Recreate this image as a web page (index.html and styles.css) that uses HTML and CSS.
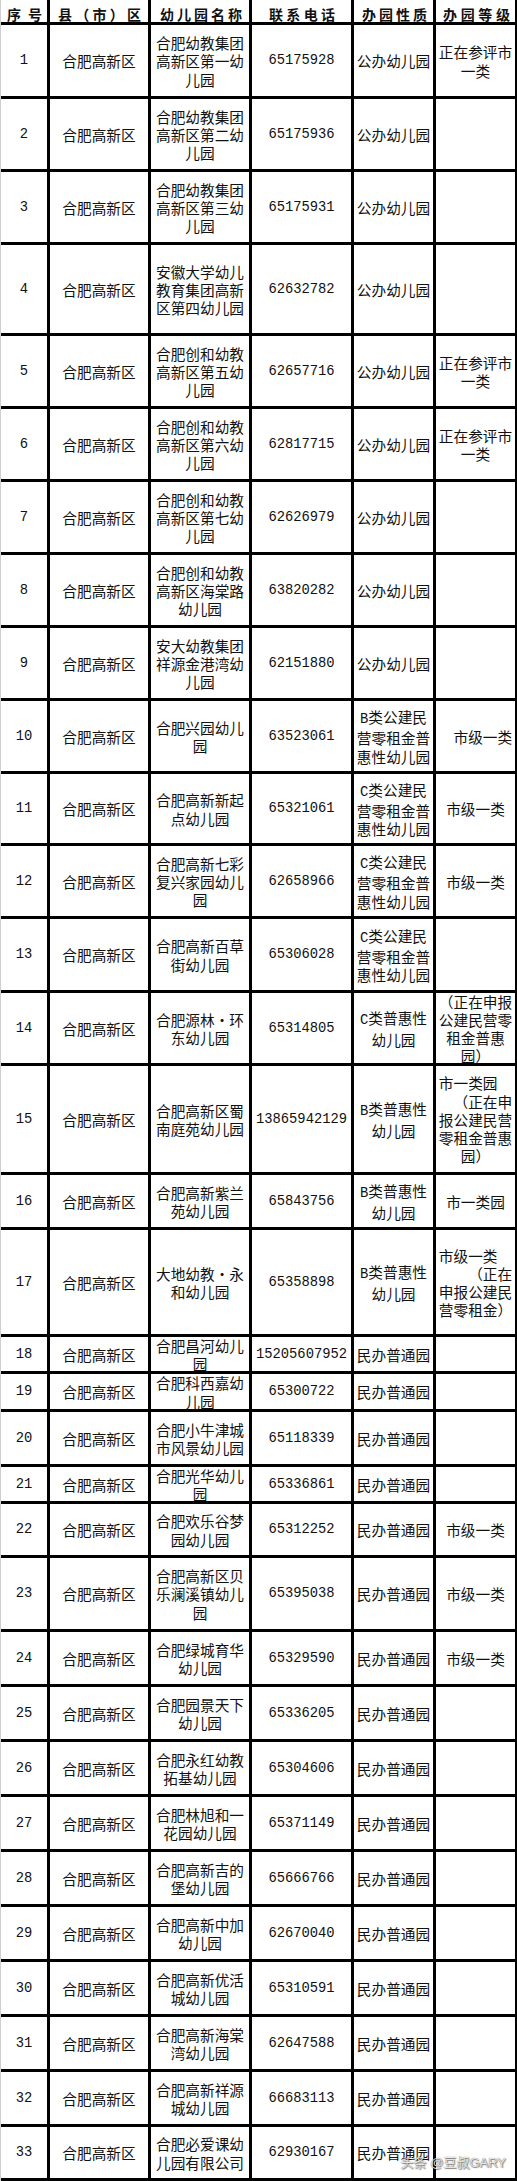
FILE: index.html
```html
<!DOCTYPE html>
<html lang="zh-CN">
<head>
<meta charset="utf-8">
<title>合肥高新区幼儿园名单</title>
<link rel="stylesheet" href="styles.css">
</head>
<body>
<div class="sheet">
  <div class="row head">
    <div class="cell hd hd1"><span>序</span><span>号</span></div>
    <div class="cell hd hd2"><span>县</span><span>（</span><span>市</span><span>）</span><span>区</span></div>
    <div class="cell hd hd3"><span>幼</span><span>儿</span><span>园</span><span>名</span><span>称</span></div>
    <div class="cell hd hd4"><span>联</span><span>系</span><span>电</span><span>话</span></div>
    <div class="cell hd hd5"><span>办</span><span>园</span><span>性</span><span>质</span></div>
    <div class="cell hd hd6"><span>办</span><span>园</span><span>等</span><span>级</span></div>
  </div>

  <div class="row h71"><div class="cell num">1</div><div class="cell">合肥高新区</div><div class="cell">合肥幼教集团高新区第一幼儿园</div><div class="cell num">65175928</div><div class="cell">公办幼儿园</div><div class="cell">正在参评市一类</div></div>
  <div class="row h70"><div class="cell num">2</div><div class="cell">合肥高新区</div><div class="cell">合肥幼教集团高新区第二幼儿园</div><div class="cell num">65175936</div><div class="cell">公办幼儿园</div><div class="cell"></div></div>
  <div class="row h70"><div class="cell num">3</div><div class="cell">合肥高新区</div><div class="cell">合肥幼教集团高新区第三幼儿园</div><div class="cell num">65175931</div><div class="cell">公办幼儿园</div><div class="cell"></div></div>
  <div class="row h88"><div class="cell num">4</div><div class="cell">合肥高新区</div><div class="cell">安徽大学幼儿教育集团高新区第四幼儿园</div><div class="cell num">62632782</div><div class="cell">公办幼儿园</div><div class="cell"></div></div>
  <div class="row h70"><div class="cell num">5</div><div class="cell">合肥高新区</div><div class="cell">合肥创和幼教高新区第五幼儿园</div><div class="cell num">62657716</div><div class="cell">公办幼儿园</div><div class="cell">正在参评市一类</div></div>
  <div class="row h70"><div class="cell num">6</div><div class="cell">合肥高新区</div><div class="cell">合肥创和幼教高新区第六幼儿园</div><div class="cell num">62817715</div><div class="cell">公办幼儿园</div><div class="cell">正在参评市一类</div></div>
  <div class="row h70"><div class="cell num">7</div><div class="cell">合肥高新区</div><div class="cell">合肥创和幼教高新区第七幼儿园</div><div class="cell num">62626979</div><div class="cell">公办幼儿园</div><div class="cell"></div></div>
  <div class="row h70"><div class="cell num">8</div><div class="cell">合肥高新区</div><div class="cell">合肥创和幼教高新区海棠路幼儿园</div><div class="cell num">63820282</div><div class="cell">公办幼儿园</div><div class="cell"></div></div>
  <div class="row h70"><div class="cell num">9</div><div class="cell">合肥高新区</div><div class="cell">安大幼教集团祥源金港湾幼儿园</div><div class="cell num">62151880</div><div class="cell">公办幼儿园</div><div class="cell"></div></div>
  <div class="row h70"><div class="cell num">10</div><div class="cell">合肥高新区</div><div class="cell">合肥兴园幼儿园</div><div class="cell num">63523061</div><div class="cell"><span><span class="lat">B</span>类公建民营零租金普惠性幼儿园</span></div><div class="cell"><span><span class="sp"></span>市级一类</span></div></div>
  <div class="row h69"><div class="cell num">11</div><div class="cell">合肥高新区</div><div class="cell">合肥高新新起点幼儿园</div><div class="cell num">65321061</div><div class="cell"><span><span class="lat">C</span>类公建民营零租金普惠性幼儿园</span></div><div class="cell">市级一类</div></div>
  <div class="row h70"><div class="cell num">12</div><div class="cell">合肥高新区</div><div class="cell">合肥高新七彩复兴家园幼儿园</div><div class="cell num">62658966</div><div class="cell"><span><span class="lat">C</span>类公建民营零租金普惠性幼儿园</span></div><div class="cell">市级一类</div></div>
  <div class="row h71"><div class="cell num">13</div><div class="cell">合肥高新区</div><div class="cell">合肥高新百草街幼儿园</div><div class="cell num">65306028</div><div class="cell"><span><span class="lat">C</span>类公建民营零租金普惠性幼儿园</span></div><div class="cell"></div></div>
  <div class="row h70"><div class="cell num">14</div><div class="cell">合肥高新区</div><div class="cell"><span>合肥源林<span class="dot">·</span>环东幼儿园</span></div><div class="cell num">65314805</div><div class="cell"><span><span class="lat">C</span>类普惠性幼儿园</span></div><div class="cell"><span>（正在申报<br>公建民营零<br>租金普惠<br>园）</span></div></div>
  <div class="row h106"><div class="cell num">15</div><div class="cell">合肥高新区</div><div class="cell">合肥高新区蜀南庭苑幼儿园</div><div class="cell num">13865942129</div><div class="cell"><span><span class="lat">B</span>类普惠性幼儿园</span></div><div class="cell"><span>市一类园<span class="sp"></span><br><span class="sp"></span>（正在申<br>报公建民营<br>零租金普惠<br>园）</span></div></div>
  <div class="row h52"><div class="cell num">16</div><div class="cell">合肥高新区</div><div class="cell">合肥高新紫兰苑幼儿园</div><div class="cell num">65843756</div><div class="cell"><span><span class="lat">B</span>类普惠性幼儿园</span></div><div class="cell">市一类园</div></div>
  <div class="row h104"><div class="cell num">17</div><div class="cell">合肥高新区</div><div class="cell"><span>大地幼教<span class="dot">·</span>永和幼儿园</span></div><div class="cell num">65358898</div><div class="cell"><span><span class="lat">B</span>类普惠性幼儿园</span></div><div class="cell"><span>市级一类<span class="sp"></span><br><span class="sp"></span><span class="sp"></span>（正在<br>申报公建民<br>营零租金）</span></div></div>
  <div class="row h34"><div class="cell num">18</div><div class="cell">合肥高新区</div><div class="cell">合肥昌河幼儿园</div><div class="cell num">15205607952</div><div class="cell">民办普通园</div><div class="cell"></div></div>
  <div class="row h35"><div class="cell num">19</div><div class="cell">合肥高新区</div><div class="cell">合肥科西嘉幼儿园</div><div class="cell num">65300722</div><div class="cell">民办普通园</div><div class="cell"></div></div>
  <div class="row h52"><div class="cell num">20</div><div class="cell">合肥高新区</div><div class="cell">合肥小牛津城市风景幼儿园</div><div class="cell num">65118339</div><div class="cell">民办普通园</div><div class="cell"></div></div>
  <div class="row h34"><div class="cell num">21</div><div class="cell">合肥高新区</div><div class="cell">合肥光华幼儿园</div><div class="cell num">65336861</div><div class="cell">民办普通园</div><div class="cell"></div></div>
  <div class="row h51"><div class="cell num">22</div><div class="cell">合肥高新区</div><div class="cell">合肥欢乐谷梦园幼儿园</div><div class="cell num">65312252</div><div class="cell">民办普通园</div><div class="cell">市级一类</div></div>
  <div class="row h71"><div class="cell num">23</div><div class="cell">合肥高新区</div><div class="cell">合肥高新区贝乐澜溪镇幼儿园</div><div class="cell num">65395038</div><div class="cell">民办普通园</div><div class="cell">市级一类</div></div>
  <div class="row h52"><div class="cell num">24</div><div class="cell">合肥高新区</div><div class="cell">合肥绿城育华幼儿园</div><div class="cell num">65329590</div><div class="cell">民办普通园</div><div class="cell">市级一类</div></div>
  <div class="row h52"><div class="cell num">25</div><div class="cell">合肥高新区</div><div class="cell">合肥园景天下幼儿园</div><div class="cell num">65336205</div><div class="cell">民办普通园</div><div class="cell"></div></div>
  <div class="row h52"><div class="cell num">26</div><div class="cell">合肥高新区</div><div class="cell">合肥永红幼教拓基幼儿园</div><div class="cell num">65304606</div><div class="cell">民办普通园</div><div class="cell"></div></div>
  <div class="row h52"><div class="cell num">27</div><div class="cell">合肥高新区</div><div class="cell">合肥林旭和一花园幼儿园</div><div class="cell num">65371149</div><div class="cell">民办普通园</div><div class="cell"></div></div>
  <div class="row h52"><div class="cell num">28</div><div class="cell">合肥高新区</div><div class="cell">合肥高新吉的堡幼儿园</div><div class="cell num">65666766</div><div class="cell">民办普通园</div><div class="cell"></div></div>
  <div class="row h52"><div class="cell num">29</div><div class="cell">合肥高新区</div><div class="cell">合肥高新中加幼儿园</div><div class="cell num">62670040</div><div class="cell">民办普通园</div><div class="cell"></div></div>
  <div class="row h52"><div class="cell num">30</div><div class="cell">合肥高新区</div><div class="cell">合肥高新优活城幼儿园</div><div class="cell num">65310591</div><div class="cell">民办普通园</div><div class="cell"></div></div>
  <div class="row h52"><div class="cell num">31</div><div class="cell">合肥高新区</div><div class="cell">合肥高新海棠湾幼儿园</div><div class="cell num">62647588</div><div class="cell">民办普通园</div><div class="cell"></div></div>
  <div class="row h52"><div class="cell num">32</div><div class="cell">合肥高新区</div><div class="cell">合肥高新祥源城幼儿园</div><div class="cell num">66683113</div><div class="cell">民办普通园</div><div class="cell"></div></div>
  <div class="row h51"><div class="cell num">33</div><div class="cell">合肥高新区</div><div class="cell">合肥必爱课幼儿园有限公司</div><div class="cell num">62930167</div><div class="cell">民办普通园</div><div class="cell"></div></div>

  <div class="wm">头条 @豆叔GARY</div>
</div>
</body>
</html>
```

FILE: styles.css
```css
html, body {
  margin: 0;
  padding: 0;
  background: #fff;
}

.sheet {
  position: relative;
  width: 517px;
  box-sizing: border-box;
  display: flex;
  flex-direction: column;
  gap: 3px;
  background: #000;
  border-left: 1px solid #cfcfcf;
  padding: 0 2px 3px 0;
  font-family: "Noto Sans CJK SC", sans-serif;
  font-size: 14.67px;
  line-height: 18.25px;
  color: #111;
  text-spacing-trim: space-all;
  text-autospace: no-autospace;
}

.row {
  display: grid;
  grid-template-columns: 46px 98px 98px 99px 79px 79px;
  grid-template-rows: minmax(0, 1fr);
  column-gap: 3px;
  flex: none;
}

.cell {
  background: #fff;
  display: flex;
  align-items: center;
  justify-content: center;
  text-align: center;
  min-width: 0;
  min-height: 0;
  padding-top: 2px;
  box-sizing: border-box;
}

.num {
  font-family: "Liberation Mono", monospace;
  font-size: 13.8px;
}

.lat {
  font-family: "Liberation Mono", monospace;
  font-size: 13.8px;
}

.dot {
  display: inline-block;
  width: 1em;
  text-align: center;
}

.sp {
  display: inline-block;
  width: 1em;
}

/* header */
.head {
  height: 22px;
}

.hd {
  justify-content: space-between;
  font-weight: 700;
  font-size: 14px;
  line-height: 16px;
  padding-top: 5px;
  color: #111;
}

.hd1 { padding-left: 6px; padding-right: 5px; }
.hd2 { padding-left: 8px; padding-right: 7px; }
.hd3 { padding-left: 9px; padding-right: 7px; }
.hd4 { padding-left: 17px; padding-right: 16px; }
.hd5 { padding-left: 8px; padding-right: 6px; }
.hd6 { padding-left: 7px; padding-right: 5px; }

/* row heights */
.h34 { height: 34px; }
.h35 { height: 35px; }
.h51 { height: 51px; }
.h52 { height: 52px; }
.h69 { height: 69px; }
.h70 { height: 70px; }
.h71 { height: 71px; }
.h88 { height: 88px; }
.h104 { height: 104px; }
.h106 { height: 106px; }

/* watermark */
.wm {
  position: absolute;
  right: 11px;
  bottom: 11px;
  font-family: "Liberation Sans", "Noto Sans CJK SC", sans-serif;
  font-size: 13px;
  line-height: 14px;
  color: rgba(255, 255, 255, 0.85);
  text-shadow: 0 0 1px rgba(0, 0, 0, 0.7), 1px 1px 1px rgba(0, 0, 0, 0.45);
  white-space: nowrap;
}
```
